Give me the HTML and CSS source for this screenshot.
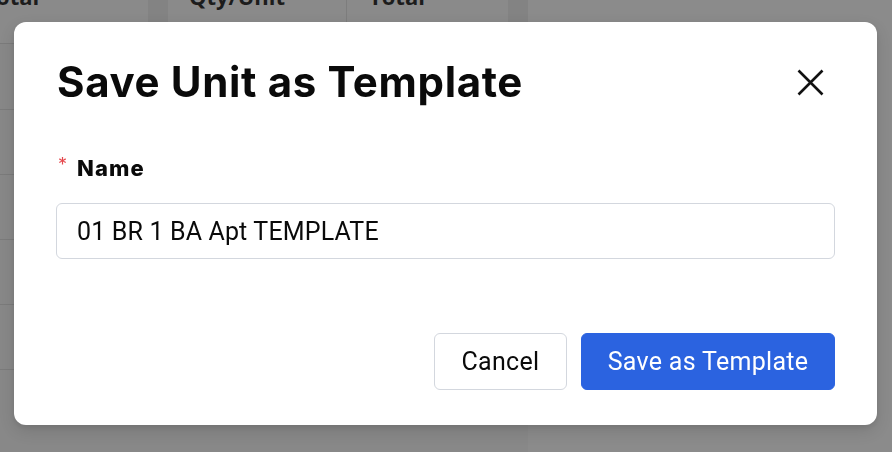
FILE: index.html
```html
<!DOCTYPE html>
<html lang="en">
<head>
<meta charset="utf-8">
<title>Save Unit as Template</title>
<link rel="stylesheet" href="styles.css">
</head>
<body>
<div class="page">
  <div class="table">
    <div class="thead">
      <div class="th th-a"><span>Subtotal</span></div>
      <div class="th th-gap"></div>
      <div class="th th-b"><span>Qty/Unit</span></div>
      <div class="th th-c"><span>Total</span></div>
      <div class="th th-gap"></div>
    </div>
    <div class="row row-first"></div>
    <div class="row"></div>
    <div class="row"></div>
    <div class="row"></div>
    <div class="row"></div>
  </div>
  <div class="rest"></div>
</div>

<div class="overlay">
  <div class="modal">
    <div class="modal-head">
      <h1 class="modal-title">Save Unit as Template</h1>
      <button class="close" aria-label="Close">
        <svg width="27" height="27" viewBox="0 0 27 27"><path d="M1.5 1.5 L25.5 25.5 M25.5 1.5 L1.5 25.5" stroke="#111" stroke-width="2.6" stroke-linecap="butt" fill="none"/></svg>
      </button>
    </div>
    <div class="field">
      <label class="label"><span class="req">*</span>Name</label>
      <div class="input">01 BR 1 BA Apt TEMPLATE</div>
    </div>
    <div class="actions">
      <button class="btn btn-cancel">Cancel</button>
      <button class="btn btn-primary">Save as Template</button>
    </div>
  </div>
</div>
</body>
</html>
```

FILE: styles.css
```css
* { box-sizing: border-box; }
html, body { margin: 0; padding: 0; }
body {
  width: 892px;
  height: 452px;
  overflow: hidden;
  background: #888888;
  font-family: Inter, "Noto Sans", sans-serif;
}
.page {
  display: flex;
  height: 452px;
}
.table {
  width: 528px;
  display: flex;
  flex-direction: column;
}
.thead {
  display: flex;
  height: 44px;
  border-bottom: 1px solid #7b7b7b;
  background: #8a8a8a;
}
.th {
  overflow: hidden;
  font-family: "Open Sans", sans-serif;
  font-weight: 700;
  font-size: 22px;
  color: #1c1c1c;
  white-space: nowrap;
}
.th span { display: block; line-height: 22px; margin-top: -15px; }
.th-a { width: 148px; }
.th-a span { margin-left: -54px; }
.th-gap { width: 20px; background: #838383; }
.th-b { width: 179px; padding-left: 21px; border-right: 1px solid #7d7d7d; }
.th-c { width: 161px; padding-left: 22px; }
.row {
  height: 65px;
  border-bottom: 1px solid #7b7b7b;
  background: #888888;
}
.row-first { height: 66px; }
.rest {
  flex: 1;
  background: #8b8b8b;
}

.overlay {
  position: fixed;
  inset: 0;
  padding: 22px 15px 27px 14px;
  display: flex;
}
.modal {
  flex: 1;
  background: #ffffff;
  border-radius: 12px;
  box-shadow: 0 6px 16px rgba(0,0,0,0.12), 0 2px 6px rgba(0,0,0,0.08);
  padding: 29px 42px 35px 43px;
  display: flex;
  flex-direction: column;
}
.modal-head {
  display: flex;
  align-items: center;
  justify-content: space-between;
  height: 62px;
}
.modal-title {
  margin: 0;
  font-family: Inter, sans-serif;
  font-weight: 700;
  font-size: 42px;
  line-height: 50px;
  color: #0a0a0a;
  letter-spacing: 0.65px;
}
.close {
  border: 0;
  background: none;
  padding: 0;
  width: 27px;
  height: 27px;
  margin-right: 11px;
  display: flex;
}
.field {
  margin-top: 42px;
  display: flex;
  flex-direction: column;
}
.label {
  font-family: Inter, sans-serif;
  font-weight: 800;
  font-size: 22px;
  line-height: 26px;
  letter-spacing: 1.1px;
  color: #0a0a0a;
  display: flex;
  align-items: flex-start;
}
.req {
  color: #e5484d;
  font-weight: 400;
  font-size: 18px;
  line-height: 20px;
  letter-spacing: 0;
  margin-right: 10px;
  margin-left: 1px;
}
.input {
  margin-top: 22px;
  height: 56px;
  border: 1px solid #d3d7de;
  border-radius: 6px;
  padding: 0 20px;
  display: flex;
  align-items: center;
  font-family: Roboto, sans-serif;
  font-size: 25px;
  letter-spacing: 0.15px;
  color: #0a0a0a;
  margin-left: -1px;
}
.actions {
  margin-top: auto;
  display: flex;
  justify-content: flex-end;
  gap: 14px;
}
.btn {
  height: 57px;
  border-radius: 6px;
  font-family: Roboto, sans-serif;
  font-size: 25px;
  letter-spacing: 0.3px;
  padding: 0;
  cursor: pointer;
}
.btn-cancel {
  width: 133px;
  background: #ffffff;
  border: 1px solid #d3d7de;
  color: #0a0a0a;
}
.btn-primary {
  width: 254px;
  background: #2b63e0;
  border: 1px solid #2b63e0;
  color: #ffffff;
}
```
